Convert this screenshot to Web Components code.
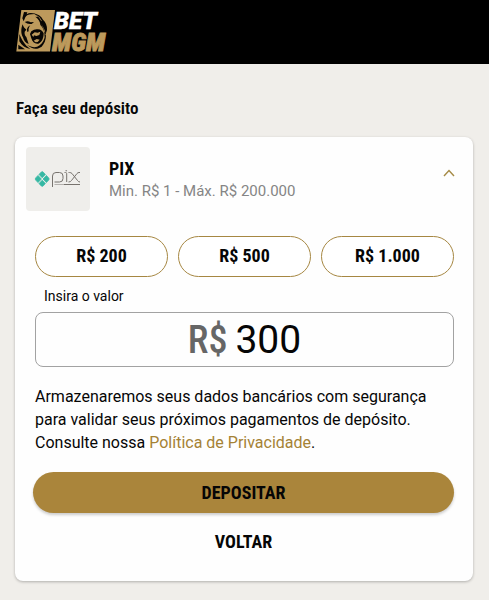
<!DOCTYPE html>
<html lang="pt-BR">
<head>
<meta charset="utf-8">
<meta name="viewport" content="width=device-width, initial-scale=1">
<title>Depósito</title>
<style>
body{margin:0;background:#f0eeea;color:#060606;font-family:Roboto,"Liberation Sans",sans-serif;min-height:100vh;--condensed:"Roboto Condensed",Roboto,sans-serif}
</style>
</head>
<body>
<deposit-page></deposit-page>
<script>
function define(name, html) {
  customElements.define(name, class extends HTMLElement {
    constructor() {
      super();
      this.attachShadow({mode: 'open'}).innerHTML = html;
    }
  });
}

define('brand-logo', `
<style>
:host{display:block}
svg{display:block;width:96px;height:44px;overflow:visible}
text{font-family:var(--condensed);font-weight:900;font-style:italic;stroke-width:.8}
</style>
<svg viewBox="0 0 96 44" role="img" aria-label="BetMGM">
  <path d="M5.300 0H39L34 41.500H.3z" fill="#bd9a5c"/>
  <g transform="translate(-16 -10) scale(.33333)" fill="#080604">
    <path d="M67 55l5-19 10 1-2 6c7-5 16-5 25-1l-10 1c-10 0-16 3-19 9l-5 12z"/>
    <path d="M98 39c15 3 26 9 31 20 8 7 13 18 12 31l-7 21c0-17-4-28-13-36 0-10-6-18-15-25l8 1c-4-5-9-8-16-12z"/>
    <path d="M74 66c7-3 12-3 18 1l10-1-7 6c-7 0-13-1-17-4z"/>
    <path d="M68 73c2 8 6 12 11 16l-5 6c-1 6 1 12 5 16l7 21c-9-3-15-10-17-20-6-10-7-25-1-39z"/>
    <path d="M91 76c-5 6-6 12-5 18l-4 2c-3-9 0-16 9-20z"/>
    <path d="M90 102l4-8 8-5 8-1c10-2 18 4 21 12 0 15-5 27-16 31-10 2-18-5-21-16z"/>
    <path d="M58 102c5 12 11 24 21 35l12 10c-15-2-25-10-33-23z"/>
    <path d="M81 134c13 8 27 11 38 2 10-8 15-18 16-31l3 1c0 14-5 26-13 34-13 9-28 9-44-6z"/>
    <path d="M55 134l20 14H55z"/>
  </g>
  <g transform="translate(-16 -10) scale(.33333)" fill="#bd9a5c">
    <path d="M95 104l9-7 9 1 8-3-3 10-9 3-7-2-2 5z"/>
    <path d="M101 122l9-5 9 2-6 7-6 1z"/>
    <path d="M104 42c11 5 18 12 22 22l-3-2c-4-8-10-14-19-20z"/>
    <path d="M123 72c6 8 11 15 13 26l-3-3c-1-8-5-15-10-23z"/>
  </g>
  <text x="38" y="19" font-size="24" fill="#fff" stroke="#fff" style="font-family:Roboto,sans-serif;stroke-width:.4">BET</text>
  <text x="36" y="41" font-size="26" fill="#bd9a5c" stroke="#bd9a5c">MGM</text>
</svg>`);

define('site-header', `
<style>
:host{display:flex;align-items:center;background:#000;height:64px;padding:0 16px;box-sizing:border-box}
</style><slot></slot>`);

define('pix-logo', `
<style>
:host{display:flex;align-items:center;justify-content:center;width:64px;height:64px;border-radius:4px;background:#efeeeb;flex:none}
svg{width:48px;height:18px}
</style>
<svg viewBox="0 0 48 18" role="img" aria-label="pix">
  <g fill="#35b8a3" stroke="#35b8a3" stroke-width=".7" stroke-linejoin="round">
    <path d="M5 4.400L7.300 2q.9-.8 1.800 0l2.300 2.400L8.200 7.800z"/>
    <path d="M5 13.600L7.300 16q.9.800 1.800 0l2.300-2.400-3.200-3.400z"/>
    <path d="M4 5.400L1.700 7.900q-1 1.100 0 2.200L4 12.600 7.400 9z"/>
    <path d="M12.400 5.400l2.300 2.500q1 1.100 0 2.200l-2.300 2.500L9 9z"/>
  </g>
  <g fill="none" stroke="#77736e" stroke-width="1">
    <path d="M18.500 17V6q0-3.500 3.500-3.500h3.500Q29 2.500 29 6v2.500q0 3.500-3.500 3.500H20.500M30.500 2.500h1q1.200 0 1.200 1.200V12M34.500 2.500h1q1.500 0 2.500 1l5.500 7q1 1.500 2.500 1.500M46 2.500h-1q-1.200 0-2 1l-5.500 7q-1 1.500-3 1.500"/>
    <path d="M30 14.500h16"/><path d="M20.500 14.500H30" stroke-width=".5"/>
  </g>
  <path d="M32.200 0l1 .8-1 .8-1-.8z" fill="#77736e"/>
</svg>`);

define('method-header', `
<style>
:host{display:flex;align-items:center;gap:19px}
.info{flex:1;min-width:0}
h2{margin:0;font:700 18px/24px var(--condensed)}
p{margin:0;font-size:15px;line-height:20px;color:#858585}
button{border:0;background:none;padding:6px;margin:0 0 12px;cursor:pointer;display:flex}
svg{width:12px;height:8px}
</style>
<pix-logo></pix-logo>
<div class="info"><h2><slot name="title"></slot></h2><p><slot name="limits"></slot></p></div>
<button type="button" aria-label="Recolher" aria-expanded="true"><svg viewBox="0 0 12 8"><path d="M1 7l5-5.500L11 7" fill="none" stroke="#a58a45" stroke-width="1.400"/></svg></button>`);

define('amount-chip', `
<style>
:host{display:block}
button{width:100%;height:41px;border:1px solid #a68742;border-radius:21px;background:#fff;color:inherit;font:700 18px/24px var(--condensed);padding:0 0 2px;cursor:pointer}
</style><button type="button"><slot></slot></button>`);

define('amount-field', `
<style>
:host{display:block}
label{display:block;font-size:14px;line-height:20px;font-weight:450;padding-left:9px;margin-bottom:6px}
.box{display:flex;align-items:center;justify-content:center;gap:8px;height:55px;box-sizing:border-box;border:1px solid #a2a2a2;border-radius:8px}
span{font:500 38px/48px var(--condensed);color:#666}
input{field-sizing:content;border:0;padding:0;margin:0;outline:0;background:none;color:inherit;font:400 39px/48px Roboto,sans-serif;max-width:60%}
</style>
<label for="v">Insira o valor</label>
<div class="box"><span>R$</span><input id="v" type="text" inputmode="numeric" value="300"></div>`);

define('action-button', `
<style>
:host{display:block}
button{width:100%;height:41px;border:0;border-radius:21px;background:none;color:inherit;font:700 18px/24px var(--condensed);padding:0;cursor:pointer}
:host([primary]) button{background:#aa853b;box-shadow:0 2px 3px #0003}
</style><button type="button"><slot></slot></button>`);

define('deposit-card', `
<style>
:host{display:block;background:#fefefe;border-radius:8px;box-shadow:0 1px 3px #0004;padding:10px 19px 19px 20px}
method-header{margin:0 -7px 25px -9px}
.chips{display:grid;grid-template-columns:repeat(3,1fr);gap:10px;margin-bottom:9px}
p{font-size:16px;line-height:23px;font-weight:450;margin:18px 0}
a{color:#a58235;text-decoration:none}
.actions{display:grid;gap:8px;margin:0 0 0 -2px}
</style>
<method-header><span slot="title">PIX</span><span slot="limits">Min. R$ 1 - Máx. R$ 200.000</span></method-header>
<div class="chips"><amount-chip>R$ 200</amount-chip><amount-chip>R$ 500</amount-chip><amount-chip>R$ 1.000</amount-chip></div>
<amount-field></amount-field>
<p>Armazenaremos seus dados bancários com segurança para validar seus próximos pagamentos de depósito. Consulte nossa <a href="#privacidade">Política de Privacidade</a>.</p>
<div class="actions"><action-button primary>DEPOSITAR</action-button><action-button>VOLTAR</action-button></div>`);

define('deposit-page', `
<style>
:host{display:block}
main{padding:32px 16px 19px 15px}
h1{margin:0 0 17px 1px;font:600 17px/24px var(--condensed)}
</style>
<site-header><brand-logo></brand-logo></site-header>
<main><h1>Faça seu depósito</h1><deposit-card></deposit-card></main>`);
</script>
</body>
</html>
